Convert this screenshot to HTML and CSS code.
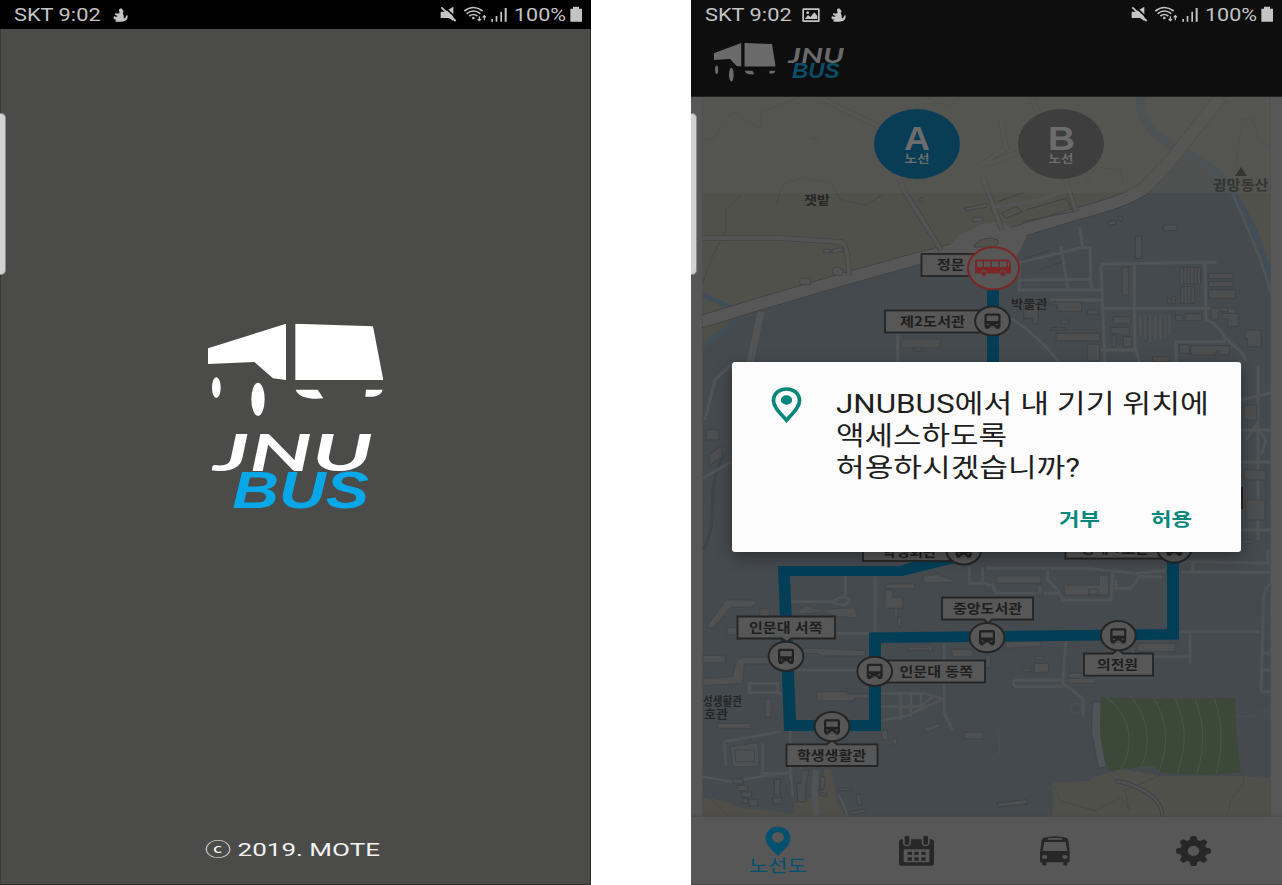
FILE: index.html
```html
<!DOCTYPE html>
<html lang="ko">
<head>
<meta charset="utf-8">
<title>JNUBUS</title>
<link rel="stylesheet" href="styles.css">
</head>
<body>
<svg class="defs" width="0" height="0">
  <defs>
    <symbol id="bus-mark" viewBox="54 41 526 277" preserveAspectRatio="none">
      <path d="M54 115 288 41V210L249 205 193 156 54 162ZM316 41 549 49 580 210H316ZM317 239H383L400 265C360 269 325 262 317 239ZM528 239H578C574 255 560 262 526 260Z"/>
      <ellipse cx="79" cy="233" rx="13" ry="31"/><ellipse cx="204" cy="268" rx="20" ry="50"/>
    </symbol>
    <symbol id="duck" viewBox="0 0 44 42">
      <path d="M17 7C15 1 27-2 28 6C33 9 29 13 28 15C31 20 32 25 31 31C36 31 38 27 38 23L43 22C44 35 36 42 22 41H8C3 39 8 35 12 35C6 35-1 33 0 28C1 24 5 24 8 27L13 24L6 21C2 17 7 14 12 17L19 15Z"/>
    </symbol>
    <symbol id="status-icons" viewBox="0 0 573 87">
      <path d="M122 35H135L160 20V63L147 54H122Z"/>
      <path d="M132 20 172 57" stroke="#000" stroke-width="5"/>
      <path d="M124 22 167 63" stroke="#c4c4c4" stroke-width="5.500"/>
      <g fill="none" stroke="#c4c4c4" stroke-width="5">
        <path d="M193 33Q220 12 248 33M200 41Q220 25 241 41M208 48Q220 39 232 48"/>
        <path d="M238 49V62M233 57 238 62 243 57M253 61V47M248 52 253 47 258 52" stroke-width="3.500"/>
      </g>
      <circle cx="220" cy="54" r="4"/>
      <path d="M274 57H279V65H274ZM287 48H292V65H287ZM301 35H306V65H301ZM314 24H320V65H314ZM511 26H519V20H537V26H546V65H511Z"/>
      <text x="342" y="64" font-size="53" textLength="156" lengthAdjust="spacingAndGlyphs">100%</text>
    </symbol>
    <symbol id="stop" viewBox="-18 -16 36 32" overflow="visible">
      <ellipse rx="17.4" ry="14.6" fill="#575757" stroke="#252525" stroke-width="2"/>
      <path fill="#222" d="M-6-7.500H6Q8-7.500 8-5.500V5Q8 6.500 7 6.500V7.700H3.500V6.500H-3.500V7.700H-7V6.500Q-8 6.500-8 5V-5.500Q-8-7.500-6-7.500Z"/>
      <path fill="#575757" d="M-5.800-5.200H5.800V0H-5.800ZM-6 2.200-3 3.800-4.500 4.700ZM6 2.200 3 3.800 4.500 4.700ZM-2.500 6.500H2.500L1.500 5H-1.500Z"/>
    </symbol>
  </defs>
</svg>

<main class="stage">
  <section class="phone splash">
    <header class="status">
      <svg class="status-left" viewBox="0 0 600 87"><text x="42" y="64" font-size="53" textLength="260" lengthAdjust="spacingAndGlyphs">SKT 9:02</text><use href="#duck" x="340" y="24" width="44" height="42"/></svg>
      <svg class="status-right"><use href="#status-icons"/></svg>
    </header>
    <svg class="logo" viewBox="0 0 630 630">
      <use href="#bus-mark" x="54" y="41" width="526" height="277" fill="#fff"/>
      <text class="jnu" x="70" y="483" font-size="154" textLength="478" lengthAdjust="spacingAndGlyphs">JNU</text>
      <text class="bus" x="127" y="594" font-size="153" textLength="410" lengthAdjust="spacingAndGlyphs">BUS</text>
    </svg>
    <svg class="copyright" viewBox="0 0 180 24"><text x="2" y="18" font-size="18.500" textLength="175" lengthAdjust="spacingAndGlyphs">ⓒ 2019. MOTE</text></svg>
    <i class="edge"></i>
  </section>

  <section class="phone app">
    <header class="status">
      <svg class="status-left" viewBox="0 0 600 87"><text x="42" y="64" font-size="53" textLength="260" lengthAdjust="spacingAndGlyphs">SKT 9:02</text>
        <path fill-rule="evenodd" d="M337 25H383Q386 25 386 28V63Q386 66 383 66H337Q334 66 334 63V28Q334 25 337 25ZM339 30V61H381V30ZM342 56 351 45 358 51 370 37 379 48V57H342Z"/><circle cx="350" cy="38" r="4"/>
        <use href="#duck" x="421" y="24" width="44" height="42"/></svg>
      <svg class="status-right"><use href="#status-icons"/></svg>
    </header>
    <div class="appbar">
      <svg class="bar-logo" viewBox="0 87 600 204">
        <use href="#bus-mark" x="68" y="129" width="186" height="116" fill="#6a6a6a"/>
        <text class="jnu dim" x="292" y="188" font-size="65" textLength="168" lengthAdjust="spacingAndGlyphs">JNU</text>
        <text class="bus dim" x="303" y="234" font-size="64" textLength="143" lengthAdjust="spacingAndGlyphs">BUS</text>
      </svg>
    </div>

    <svg class="map" viewBox="0 97 591 720">
      <defs><clipPath id="area"><rect x="11.500" y="97" width="568" height="720"/></clipPath></defs>
      <g clip-path="url(#area)">
        <rect x="11" y="97" width="569" height="720" fill="#454a4e"/>
        <!-- fields -->
        <path fill="#51514b" d="M11 97H528L480 165 450 195 385 213 300 240 150 280 11 323Z"/>
        <path fill="#51514b" d="M528 97H580V300L562 235 541 193 520 172 492 152Z"/>
        <path fill="#4f4e49" d="M11 324 40 310 45 325 11 345ZM11 797Q35 800 50 808L103 814V803L130 795 133 770H140L147 805 155 817H11Z"/>
        <path fill="#50504a" d="M361 814V782L400 778 430 769 470 776H551L579 778V817H361Z"/>
        <g fill="none" stroke="#47484a" stroke-width="1">
          <path d="M11 141 25 137 32 120 42 112 58 122 70 129 70 112 110 97M11 285 22 255 35 230 35 210 50 196M85 205 92 184 112 178 140 183 150 200 175 205 193 194M544 170 551 120 561 118 568 140 579 146"/>
          <path d="M363 785 369 801 405 811 430 797 438 810 434 790 452 783 471 774M536 817 540 800 553 782 552 773M11 796Q25 800 38 817"/>
          <path d="M120 138q5-2 6 3zM235 97 258 108 268 97M395 182 405 167 430 170 432 185"/>
        </g>
        <!-- river -->
        <path fill="none" stroke="#3f4f59" stroke-width="5" d="M11 295 42 308Q47 320 36 328L11 347"/>
        <path fill="none" stroke="#414e57" stroke-width="8" d="M450 97Q446 119 468 137L484 149Q509 156 529 176L542 193 562 230 581 282"/>
        <path fill="none" stroke="#3d434a" stroke-width="3" d="M12 550C30 520 12 490 33 455"/>
        <!-- main road -->
        <path fill="none" stroke="#3f4142" stroke-width="13" d="M9 322 75 302 150 280 229 258 300 240 385 214Q440 200 455 187L480 160 530 97"/>
        <path fill="none" stroke="#575757" stroke-width="11.500" d="M9 322 75 302 150 280 229 258 300 240 385 214Q440 200 455 187L480 160 530 97"/>
        <path fill="#575757" d="M245 253Q259 248 267 236L292 224 308 222 336 236 323 262 302 276 272 269Z"/>
        <path fill="#51514b" stroke="#414342" d="M283 247Q286 238 300 238L307 240Q308 246 302 247Z"/>
        <path fill="none" stroke="#424445" stroke-width="5.500" d="M11 238H88L150 242Q157 243 158 276M130 97 147 107 185 125 213 190 250 250M340 97 348 115 365 150 385 212M310 120 315 148 290 165M295 165 315 157 350 145M291 175 311 230"/>
        <path fill="none" stroke="#545454" stroke-width="4" d="M11 238H88L150 242Q157 243 158 276M130 97 147 107 185 125 213 190 250 250M340 97 348 115 365 150 385 212M310 120 315 148 290 165M295 165 315 157 350 145M291 175 311 230M302 207 350 200 380 188"/>
        <path fill="none" stroke="#525456" stroke-width="7" d="M70 312 66 330 59 364"/>
        <!-- north campus -->
        <g transform="translate(295 190) scale(.33333)">
          <g fill="none" stroke="#505457" stroke-width="9">
            <path d="M281 110 290 172 100 218V300H345M290 172 312 175 315 295M225 170 246 298M100 270 312 268M345 225 357 515M345 222 692 217M445 220V350L447 470 460 515M345 355H720L745 370M657 220 660 390Q690 395 718 445L770 490 780 515M570 515V455H718M75 385Q150 430 218 515M345 480H445M190 330H345"/>
            <path d="M740 10 820 200 853 300" stroke-width="8"/>
          </g>
          <g fill="#4d4e50" stroke="#3e4245" stroke-width="3">
            <path d="M365 95 387 90 390 103 370 106ZM396 80 407 77 410 90 401 94ZM532 105H573V122H532ZM448 138H467V205H448ZM408 232H427V315H408ZM582 232H644V282H582ZM584 290H626V340H584ZM668 250H741V266H668ZM668 275H741V290H668ZM668 299H748V325H668ZM545 325H556V341H545ZM557 320H569V341H557ZM210 336H287V364H214V345H192V336ZM304 360H337V373H304ZM113 340H157V402H140V385H113ZM210 430H341V453H210ZM304 463H341V513H304ZM382 380H432V402H382ZM374 412H430V435H400V430H374ZM378 436H390V470H378ZM412 440H437V470H412ZM598 371H647V392H598ZM568 375H590V392H568ZM675 353H726V365H697V390H675ZM710 370H758V410H725V387H710ZM580 464H610V490H580ZM614 467H730V494H700V482H690V494H614ZM776 420H826V470H784V445H776ZM500 500H550V515H500ZM225 390H248V402H225ZM195 413H240V420H195Z"/>
            <path d="M593 234V280M603 234V280M613 234V280M624 234V280M634 234V280M594 292V338M605 292V338M615 292V338"/>
            <path d="M463 375V440M478 375V450M493 375V455M508 375V450M523 375V445M538 375V440M550 375V435" stroke="#505254" stroke-width="6"/>
          </g>
          <path fill="none" stroke="#3e4245" stroke-width="3" d="M35 35 120 5M45 70 90 50 110 65 60 85ZM120 60 240 25 260 65 110 95M110 210 195 178M160 240 230 215"/>
        </g>
        <g transform="translate(0 190) scale(.33333)" fill="#545454" stroke="#424445" stroke-width="3">
          <path d="M327 265H358V284H327ZM425 235 440 230 458 242 452 258 425 252ZM398 178H418V188H398ZM423 178 452 173 455 184 424 188ZM845 82H875V95H845ZM820 55 888 40V52L825 62Z"/>
          <path d="M633 447H748V473H633ZM670 473H690V484H670Z" fill="#4d4e50"/><path d="M620 430V515" stroke="#505457" stroke-width="8"/>
          <ellipse cx="690" cy="30" rx="7" ry="6"/>
        </g>
        <!-- side strips beside the dialog -->
        <path fill="none" stroke="#505457" stroke-width="3" d="M14 420 24 380 40 365M12 478 40 462M549 360V384M550 400 579 393M549 430H579M548 462H579M550 530H579M567 365V540M555 440 565 425 575 440 570 455"/>
        <path fill="#4d4e50" stroke="#3e4245" d="M15 430H28V440H15ZM18 455 31 445V456L18 466ZM553 405H566V420H553ZM553 470H575V480H553ZM555 500H574V520H555Z"/>
        <path d="M549 487H552V509H549Z" fill="#252525"/>
        <!-- south west campus -->
        <g transform="translate(0 540) scale(.33333)">
          <path fill="none" stroke="#4f5356" stroke-width="8" d="M463 108V165M300 185H425Q445 170 465 172Q485 185 460 195Q440 195 425 185M552 110V275M300 280H540M300 390H535M175 430H260V458H175ZM260 460H280M570 460H700L760 478M570 500H690L730 465M575 540 640 530 750 480M630 460V540M660 460V530M690 460V510M760 310V520L785 570M298 570V720M330 680V720M835 80V130H888M875 80V130M270 575 100 605 105 680M215 610V700H290"/>
          <path fill="#4e5052" stroke="#414548" stroke-width="3" d="M45 262 105 180H190L197 195 175 202H120L65 265ZM206 206H235V235H206ZM108 263H138V285H108ZM35 346H103V368H35ZM35 415 125 410 135 365 150 352H235V372H160L155 430 35 437ZM222 475H240V530H222ZM80 550H178V565H80ZM320 210 345 197 385 208 490 203 500 235 430 228 400 215 325 222ZM305 325H380L523 332V348H390L380 340H305ZM378 455H470V462H532V475H490V483H378ZM582 150H605V172H635V205H610V232H630V260H620V205H582ZM586 132H671V146H586ZM697 105H730V100L788 120V128H697ZM645 315H718L726 333H650ZM650 322 712 322V330H655ZM780 328H845V350H785ZM700 565 740 550 748 560 705 578ZM820 577H879V596H820ZM572 570H590V600H572ZM605 595H617V613H605ZM118 620 200 608 205 680H125ZM130 630H190V665H135Z"/>
        </g>
        <!-- south east campus -->
        <g transform="translate(295 540) scale(.33333)">
          <path fill="none" stroke="#4f5356" stroke-width="9" d="M0 85H300L450 100 540 92M0 135H20L30 160H220L230 180H375L380 95M185 90V120L220 155M385 145H435L460 110H530M585 65H640L850 70M585 97H850M845 30V65M855 130Q835 145 833 170L825 455M580 275H820M440 325V350H610M612 280V370M240 300 230 430 290 475 293 530M85 420H230M230 440H95Q78 440 85 420M620 65V97M390 120V145M825 340H855M825 390H855M825 455H855"/>
          <g fill="#4e5052" stroke="#414548" stroke-width="3">
            <path d="M32 108H165V130H32ZM153 135H170V165H153ZM235 135H340V105H368V165H235ZM307 148H336V163H307ZM60 305H165V318L60 325ZM145 370H188V397H145ZM110 386H135V395H110ZM148 349H172V358H148ZM247 415H330V430H247ZM250 400H300V415H250ZM460 310H570V335H470L450 330ZM0 345H14V383H0ZM765 0H795V10H765ZM700 0H735V8H700Z"/>
            <circle cx="270" cy="506" r="16" fill="none" stroke="#4c5053" stroke-width="4"/>
            <path fill="#515457" d="M322 486H345V590L360 680 338 685 317 580V530Z"/>
            <path fill="none" stroke="#4c5053" d="M747 530H790L830 510 855 520M35 560 43 640 0 680"/>
          </g>
          <path fill="#3c4938" d="M345 472 500 477 748 474 750 560 764 697Q640 712 520 697L505 675 370 693Q345 630 342 560Z"/>
          <path fill="none" stroke="#4a5647" stroke-width="3" d="M360 472C440 530 445 620 405 687M440 475C490 545 495 620 465 680M505 478C545 545 548 620 518 695M567 476C600 545 605 620 573 700M627 476C655 545 658 620 632 703M685 475C710 545 712 620 690 703"/>
        </g>
        <g transform="translate(0 770) scale(.33333)">
          <path d="M375 0 370 65 378 142" fill="none" stroke="#515355" stroke-width="18"/><path d="M35 20 120 35 300 5 305 80" fill="none" stroke="#505457" stroke-width="7"/>
          <path fill="#4d4e50" stroke="#3e4245" stroke-width="3" d="M122 26H155L160 42H128ZM138 46H170V62H143ZM150 66H182V82H155ZM155 86H170V100H155ZM174 88H200V108H174ZM250 28H268V75H250ZM245 83H273V102H248ZM330 0H355L345 40V95H320L317 40H330ZM390 20H403L398 60H387ZM388 69H408V78H388ZM436 54H483V62H436ZM495 72H507L513 105H500ZM475 125 525 118 527 126 480 134Z"/>
          <path fill="none" stroke="#555" stroke-width="5" d="M443 75Q458 100 470 140"/>
          <path fill="#454a4e" d="M888 0H1200V32L1085 38V126L888 140Z"/>
        </g>
        <g transform="translate(295 770) scale(.33333)"><path fill="#4e5052" stroke="#3e4245" stroke-width="3" d="M34 99 122 89 125 101 37 111ZM388 29H405Q535 65 535 142H525Q525 75 405 41L388 39Z"/></g>
        <!-- translucent strip under the route buttons -->
        <rect x="11" y="97" width="569" height="96" fill="#575755" opacity=".58"/>
      </g>

      <g class="place">
        <text x="113" y="205" textLength="26" lengthAdjust="spacingAndGlyphs">잿밭</text>
        <text x="320" y="309" textLength="36.500" lengthAdjust="spacingAndGlyphs">박물관</text>
        <text x="521.500" y="190" textLength="56" lengthAdjust="spacingAndGlyphs" font-size="14" fill="#343434">귕망동산</text>
        <text x="12" y="706" textLength="39" lengthAdjust="spacingAndGlyphs">성생활관</text>
        <text x="13" y="719" textLength="24" lengthAdjust="spacingAndGlyphs">호관</text>
      </g>
      <path d="M544 176 550 167 556 176Z" fill="#343434"/>

      <!-- route line -->
      <path fill="#023f56" d="M296 288H308V365H296ZM87 566H208L258 552 276 560 212 576H99L105 720H178V632.500L476 629V555H488V639.500L190 643V731H93Z"/>

      <g class="tag">
        <rect x="230.500" y="254" width="55" height="22"/><rect x="194" y="310.500" width="95" height="22"/>
        <rect x="172" y="540" width="95" height="21"/><rect x="374.500" y="540" width="100" height="18.500"/>
        <path d="M46.500 616.500H144V638.500H100L96 642 91 638.500H46.500Z"/>
        <rect x="195" y="660.500" width="99" height="22"/>
        <path d="M95.500 744.300H136L141 740 146 744.300H186.500V766H95.500Z"/>
        <path d="M251 597.500H342V619.500H301L297 623 293 619.500H251Z"/>
        <path d="M393 653.500H422L427 649 432 653.500H462V675.700H393Z"/>
      </g>
      <g class="tag-text">
        <text x="246" y="269" textLength="27.500" lengthAdjust="spacingAndGlyphs">정문</text>
        <text x="209" y="325.500" textLength="65" lengthAdjust="spacingAndGlyphs">제2도서관</text>
        <text x="191.500" y="555.500" textLength="54" lengthAdjust="spacingAndGlyphs">학생회관</text>
        <text x="390.500" y="553" textLength="67" lengthAdjust="spacingAndGlyphs">공대 7호관</text>
        <text x="58" y="631.500" textLength="73.500" lengthAdjust="spacingAndGlyphs">인문대 서쪽</text>
        <text x="208.500" y="675.500" textLength="73.500" lengthAdjust="spacingAndGlyphs">인문대 동쪽</text>
        <text x="106" y="759.500" textLength="69" lengthAdjust="spacingAndGlyphs">학생생활관</text>
        <text x="262" y="613" textLength="69" lengthAdjust="spacingAndGlyphs">중앙도서관</text>
        <text x="406" y="669" textLength="41" lengthAdjust="spacingAndGlyphs">의전원</text>
      </g>
      <g>
        <use href="#stop" x="283.500" y="305" width="36" height="32"/><use href="#stop" x="254.700" y="534" width="36" height="32"/>
        <use href="#stop" x="465.300" y="532" width="36" height="32"/><use href="#stop" x="77" y="640.300" width="36" height="32"/>
        <use href="#stop" x="165.700" y="655.300" width="36" height="32"/><use href="#stop" x="123" y="710.700" width="36" height="32"/>
        <use href="#stop" x="278" y="621.600" width="36" height="32"/><use href="#stop" x="409.300" y="619.700" width="36" height="32"/>
      </g>
      <ellipse cx="302.500" cy="268.300" rx="25.500" ry="21" fill="#575757" stroke="#7b2624" stroke-width="2"/>
      <path fill="#7b2624" d="M286 259.500H317Q319 259.500 320 266V273.500H284V261.500Q284 259.500 286 259.500Z"/>
      <path fill="#575757" d="M286 261.300H291.500V267H286ZM293 261.300H299.500V267H293ZM301 261.300H307.500V267H301ZM309 261.300H315.500V267H309ZM316.800 261.300H317.500L318.300 267H316.800Z"/>
      <g fill="#7b2624" stroke="#575757" stroke-width="1"><circle cx="292.800" cy="273.500" r="3"/><circle cx="311.800" cy="273.500" r="3"/></g>

      <ellipse cx="226" cy="144" rx="43" ry="35" fill="#093d55"/><ellipse cx="370" cy="144" rx="43" ry="35" fill="#3e3e3e"/>
      <g class="route-name">
        <text x="213" y="150" font-size="32.500" textLength="26" lengthAdjust="spacingAndGlyphs">A</text><text x="357" y="150" font-size="32.500" textLength="27" lengthAdjust="spacingAndGlyphs">B</text>
        <text x="213.500" y="162.500" font-size="11.500" textLength="25" lengthAdjust="spacingAndGlyphs">노선</text><text x="357.500" y="162.500" font-size="11.500" textLength="25" lengthAdjust="spacingAndGlyphs">노선</text>
      </g>
    </svg>

    <nav class="tabs">
      <a class="tab active">
        <svg width="60" height="62" viewBox="0 0 180 186">
          <path fill="#03506f" fill-rule="evenodd" d="M93 20C114 20 130 34 130 54C130 77 108 92 93 108C78 92 56 77 56 54C56 34 72 20 93 20ZM93 36A18 16 0 1 0 93 68A18 16 0 1 0 93 36Z"/>
          <text x="5" y="156" font-size="51" textLength="175" lengthAdjust="spacingAndGlyphs">노선도</text>
        </svg>
      </a>
      <a class="tab"><svg width="35" height="30" viewBox="0 0 105 90"><path fill="#272727" fill-rule="evenodd" d="M8 10H12V22Q14 31 24 31Q34 31 36 22V10H68V22Q70 31 80 31Q90 31 92 22V10H97Q105 10 105 18V82Q105 89 97 89H8Q0 89 0 82V18Q0 10 8 10ZM14 40V79H91V40ZM26 47H39V57H26ZM46 47H59V57H46ZM67 47H80V57H67ZM26 64H39V74H26ZM46 64H59V74H46ZM67 64H80V74H67ZM20 0H28Q31 0 31 4V22Q31 26 28 26H20Q17 26 17 22V4Q17 0 20 0ZM76 0H84Q87 0 87 4V22Q87 26 84 26H76Q73 26 73 22V4Q73 0 76 0Z"/></svg></a>
      <a class="tab"><svg width="30" height="30" viewBox="0 0 90 90"><path fill="#272727" fill-rule="evenodd" d="M10 5Q45-4 80 5Q86 10 86 20L89 48V79H82V86Q76 91 70 86V79H19V86Q13 91 7 86V79H0V48L4 20Q4 10 10 5ZM26 6Q22 8 24 11H66Q68 8 64 6ZM13 18 8 45H82L77 18ZM14 57A8 6 0 1 0 14 69A8 6 0 1 0 14 57ZM75 57A8 6 0 1 0 75 69A8 6 0 1 0 75 57Z"/></svg></a>
      <a class="tab"><svg width="35" height="30" viewBox="0 0 24 24" preserveAspectRatio="none"><path fill="#272727" fill-rule="evenodd" d="M10 .5Q12-.5 14 .5L14.700 3.200 16.500 4 19 2.500Q20.700 3.300 21.500 5L20 7.500 20.800 9.300 23.500 10Q24.500 12 23.500 14L20.800 14.700 20 16.500 21.500 19Q20.700 20.700 19 21.500L16.500 20 14.700 20.800 14 23.500Q12 24.500 10 23.500L9.300 20.800 7.500 20 5 21.500Q3.300 20.700 2.500 19L4 16.500 3.200 14.700.5 14Q-.5 12 .5 10L3.200 9.300 4 7.500 2.500 5Q3.300 3.300 5 2.500L7.500 4 9.300 3.200ZM12 8A4 4 0 1 0 12 16A4 4 0 1 0 12 8Z"/></svg></a>
    </nav>

    <div class="dialog">
      <div class="dialog-body">
        <svg class="pin" viewBox="0 0 90 108"><path fill="none" stroke="#07877b" stroke-width="11" d="M45 6C67 6 84 20 84 41C84 62 62 80 45 100C28 80 6 62 6 41C6 20 23 6 45 6Z"/><ellipse cx="45" cy="39" rx="17" ry="14" fill="#07877b"/></svg>
        <svg class="message" viewBox="0 0 390 100">
          <text x="0" y="25.500" textLength="373" lengthAdjust="spacingAndGlyphs">JNUBUS에서 내 기기 위치에</text>
          <text x="0" y="57.500" textLength="171" lengthAdjust="spacingAndGlyphs">액세스하도록</text>
          <text x="0" y="89.500" textLength="244" lengthAdjust="spacingAndGlyphs">허용하시겠습니까?</text>
        </svg>
      </div>
      <div class="actions">
        <button><svg viewBox="0 0 44 30"><text x="1" y="22" textLength="41" lengthAdjust="spacingAndGlyphs">거부</text></svg></button>
        <button><svg viewBox="0 0 44 30"><text x="1" y="22" textLength="41" lengthAdjust="spacingAndGlyphs">허용</text></svg></button>
      </div>
    </div>
    <i class="edge"></i>
  </section>
</main>
</body>
</html>
```
FILE: styles.css
```css
* { box-sizing: border-box; }
body {
  margin: 0;
  background: #fff;
  font-family: Roboto, "Noto Sans CJK KR", sans-serif;
  overflow: hidden;
}
svg { display: block; flex: none; }
.defs { position: absolute; }
.stage { display: flex; gap: 100px; width: 1282px; height: 885px; }
.phone {
  position: relative;
  display: flex;
  flex-direction: column;
  width: 591px;
  height: 885px;
  flex: none;
  overflow: hidden;
}
.splash { background: #4b4b49; align-items: center; box-shadow: inset 1px 0 #3a3a39, inset -1px -1px #2f2f2e; }
.app { background: #575757; }
.status {
  display: flex;
  justify-content: space-between;
  align-self: stretch;
  height: 29px;
  background: #000;
  fill: #c4c4c4;
}
.app .status { background: #0e0e0e; }
.status-left { width: 200px; height: 29px; }
.status-right { width: 191px; height: 29px; }
.logo { width: 210px; height: 210px; margin: 281px 1px 0 0; }
.jnu, .bus { font-style: italic; font-weight: 700; }
.jnu { font-family: Lato, "Liberation Sans", sans-serif; fill: #fff; }
.bus { font-family: "Liberation Sans", Arial, sans-serif; fill: #07a7e8; }
.jnu.dim { fill: #6a6a6a; }
.bus.dim { fill: #0b4c66; }
.copyright { width: 180px; height: 24px; margin: auto 5px 23px 0; fill: #f2f2f2; }
.edge {
  position: absolute;
  left: 0;
  top: 113px;
  width: 6px;
  height: 162px;
  background: #d2d2d2;
  border: solid #8c8c8c;
  border-width: 1px 1px 1px 0;
  border-radius: 0 5px 5px 0;
}
.appbar { height: 68px; background: #0e0e0e; border-bottom: 1px solid #222; }
.bar-logo { width: 200px; height: 68px; }
.map { width: 591px; height: 720px; }
.place { font-size: 12.5px; font-weight: 700; fill: #262626; }
.tag { fill: #575757; stroke: #252525; stroke-width: 1.8px; }
.tag-text { font-size: 13px; font-weight: 700; fill: #1f1f1f; }
.tag-text, .place { font-family: "Noto Sans CJK KR", sans-serif; }
.route-name { font-family: "Liberation Sans", "Noto Sans CJK KR", sans-serif; font-weight: 700; fill: #6c6c6c; }
.tabs {
  display: grid;
  grid-template-columns: repeat(4, 1fr);
  height: 68px;
  padding: 0 19px 0 17px;
  background: #575757;
  box-shadow: 0 -1px 2px #4a4a4a;
  border-bottom: 1px solid #464646;
  z-index: 1;
}
.tab { display: flex; justify-content: center; align-items: center; }
.tab.active { align-items: flex-start; padding-top: 3px; fill: #03506f; }
.dialog {
  position: absolute;
  z-index: 2;
  left: 41px;
  top: 362px;
  width: 509px;
  height: 190px;
  padding: 25px 19px 0 39px;
  background: #fcfcfc;
  border-radius: 3px;
  box-shadow: 0 5px 16px rgba(0, 0, 0, .35);
}
.dialog-body { display: flex; gap: 34px; }
.pin { width: 31px; height: 36px; }
.message { width: 390px; height: 100px; font-size: 26px; fill: #1e1e1e; }
.actions { display: flex; justify-content: flex-end; gap: 48px; margin: 17px 28px 0 0; }
.actions button { padding: 0; border: 0; background: none; }
.actions svg { width: 44px; height: 30px; overflow: visible; font: 700 18.5px "Noto Sans CJK KR", sans-serif; fill: #07877b; }
```
